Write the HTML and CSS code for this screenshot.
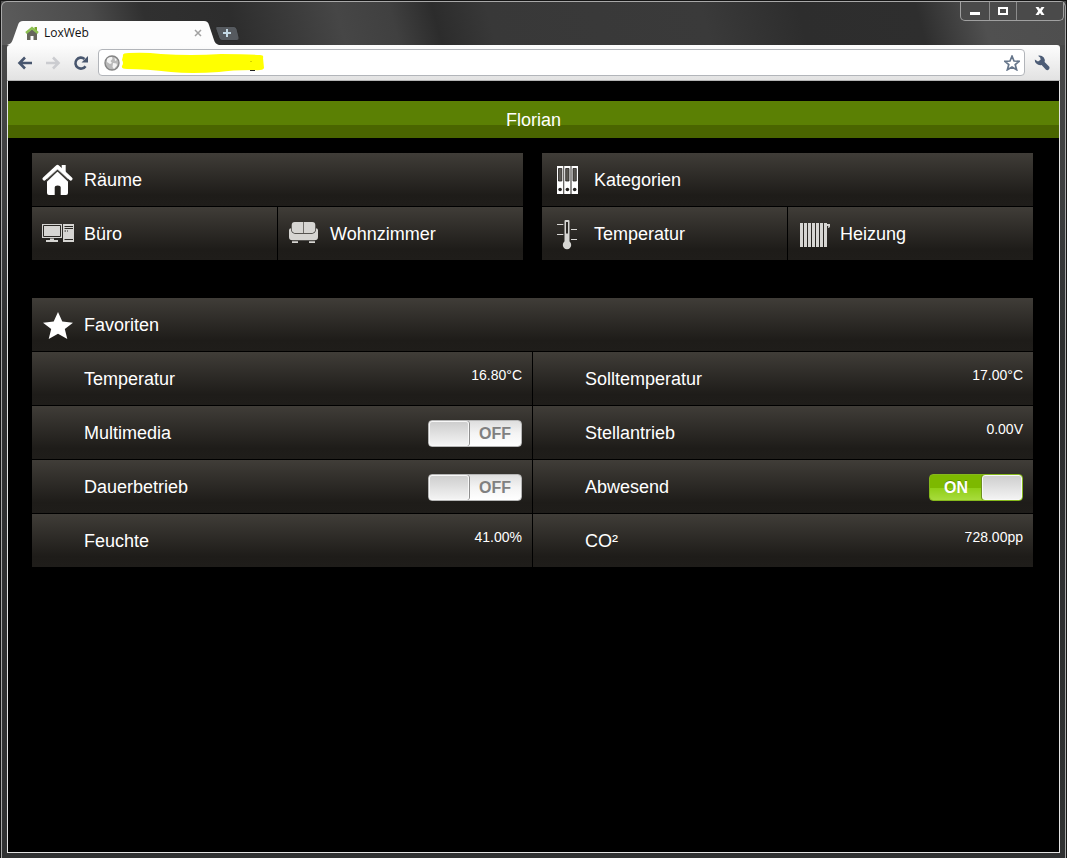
FILE: index.html
```html
<!DOCTYPE html>
<html lang="de">
<head>
    <meta charset="UTF-8">
    <meta name="viewport" content="width=device-width, initial-scale=1.0">
    <title>LoxWeb</title>
    <link rel="stylesheet" href="styles.css">
</head>
<body>

<div class="window">

    <!-- Title bar -->
    <div class="titlebar">
        <div class="tab">
            <svg class="tab-shape" viewBox="0 0 212 24" preserveAspectRatio="none">
                <path d="M0 24 C4 23 5 21 6 18 L11 4 Q12 0 16 0 H197 Q201 0 202 4 L207 19 Q208 23 212 24 Z" fill="#fdfdfd"/>
            </svg>
            <svg class="favicon" viewBox="0 0 14 14">
                <path d="M2 7 L7 3 L12 7 V14 H8.5 V10 H5.5 V14 H2 Z" fill="#66665c"/>
                <path d="M9.5 1 H12 V5 H9.5 Z" fill="#7ba62f"/>
                <path d="M1 7 L7 2 L13 7" fill="none" stroke="#8cc050" stroke-width="2.4"/>
            </svg>
            <span class="tab-title">LoxWeb</span>
            <button class="tab-close" aria-label="Tab schließen">
                <svg viewBox="0 0 8 8"><path d="M1 1 L7 7 M7 1 L1 7" stroke="#a2a2a2" stroke-width="1.5"/></svg>
            </button>
        </div>
        <button class="new-tab" aria-label="Neuer Tab">
            <svg viewBox="0 0 25 15">
                <path d="M2 .5 H19 Q21 .5 22 3 L24 11 Q25 14.5 22 14.5 H7 Q5 14.5 4 12 L.8 3 Q0 .5 2 .5 Z" fill="#565a5f" stroke="#2a2a2a"/>
                <path d="M12 3 V11 M8 7 H16" stroke="#c4d8e4" stroke-width="2"/>
            </svg>
        </button>
        <div class="window-buttons">
            <button class="win-btn" aria-label="Minimieren">
                <svg viewBox="0 0 12 12"><rect x="1" y="7" width="10" height="3" fill="#fff"/></svg>
            </button>
            <button class="win-btn win-max" aria-label="Maximieren">
                <svg viewBox="0 0 12 12"><rect x="2" y="3" width="8" height="6" fill="none" stroke="#fff" stroke-width="2"/></svg>
            </button>
            <button class="win-btn win-close" aria-label="Schließen">
                <svg viewBox="0 0 12 12"><path d="M1.5 2 H4.5 L6 4 L7.5 2 H10.5 L7.8 6 L10.5 10 H7.5 L6 8 L4.5 10 H1.5 L4.2 6 Z" fill="#fff"/></svg>
            </button>
        </div>
    </div>

    <div class="frame">
        <!-- Toolbar -->
        <div class="toolbar">
            <div class="nav">
                <button class="tool" aria-label="Zurück">
                    <svg viewBox="0 0 16 16"><path d="M15 8 H3 M8 2.5 L2.5 8 L8 13.5" fill="none" stroke="#48566e" stroke-width="2.6"/></svg>
                </button>
                <button class="tool" aria-label="Vorwärts">
                    <svg viewBox="0 0 16 16"><path d="M1 8 H13 M8 2.5 L13.5 8 L8 13.5" fill="none" stroke="#cbccd0" stroke-width="2.6"/></svg>
                </button>
                <button class="tool" aria-label="Neu laden">
                    <svg viewBox="0 0 16 16">
                        <path d="M12.5 11.2 A5.5 5.5 0 1 1 11.5 3.9" fill="none" stroke="#48566e" stroke-width="2.6"/>
                        <path d="M15 1 V7.5 H8.5 Z" fill="#48566e"/>
                    </svg>
                </button>
            </div>
            <div class="omnibox">
                <svg class="globe" viewBox="0 0 16 16">
                    <circle cx="8" cy="8" r="7" fill="#b9b9b9" stroke="#858585" stroke-width="1.4"/>
                    <path d="M3 4 Q5 1.5 8 2 L8.500 4 L6.500 6 L8 8 L6 9 L3 7 Z M9 8 L12.5 8.5 L13 10.5 L10 14 L8.5 12 Z M10.5 2.5 L13 5 L11 6 Z" fill="#f4f4f4"/>
                </svg>
                <input class="address" type="text" aria-label="Adresse">
                <svg class="marker" viewBox="0 0 144 22">
                    <path d="M2 4 Q1 1 8 1 Q24 0 40 2 Q70 4 100 2 Q125 2 139 3 Q143 3 142 6 L143 16 Q142 19 132 18 Q110 18 98 20 Q70 22 50 20 Q25 17 6 17 Q0 17 1 14 Q3 11 1 8 Z" fill="#ff0"/>
                    <path d="M129 18.5 H134" stroke="#222"/>
                    <path d="M130 9 V10" stroke="#a8a800"/>
                </svg>
                <button class="tool" aria-label="Lesezeichen">
                    <svg viewBox="0 0 16 16"><path d="M8 1.2 L10 6 L15.2 6.3 L11.2 9.6 L12.6 14.7 L8 11.9 L3.4 14.7 L4.8 9.6 L.8 6.3 L6 6 Z" fill="#fff" stroke="#65758a" stroke-width="1.7"/></svg>
                </button>
            </div>
            <button class="tool" aria-label="Einstellungen">
                <svg viewBox="0 0 16 16"><path d="M4 .8 Q7.5 0 9.8 2.5 Q11.3 4.5 10.6 7 L15.3 11.7 Q16 13 15 14.3 Q13.5 15.8 12 14.8 L7.6 10 Q4.5 10.6 2.3 8.5 Q.5 6.5 .8 4.5 L4 6.5 L6.6 4.8 L6.2 2.5 Z" fill="#4c5c76"/></svg>
            </button>
        </div>

        <!-- Page -->
        <main class="page">
            <h1 class="title">Florian</h1>

            <div class="groups">
                <section class="panel">
                    <a class="cell wide" href="#raeume">
                        <svg class="icon" viewBox="0 0 32 32" fill="#fff">
                            <path d="M19.7 1 H23.7 V10 L19.7 6 Z"/>
                            <path d="M5 15 L15.5 5 L26 15 V29 Q26 31 24 31 H18.7 V23.5 Q18.7 21.5 15.7 21.5 Q12.7 21.5 12.7 23.5 V31 H7 Q5 31 5 29 Z"/>
                            <path d="M3.8 17.7 L15.5 6.5 L27.2 17.7" fill="none" stroke="#34322e" stroke-width="1.6"/>
                            <path d="M2.3 14.8 L15.5 2.6 L28.7 14.8" fill="none" stroke="#fff" stroke-width="3.6" stroke-linecap="round" stroke-linejoin="round"/>
                        </svg>
                        <span>Räume</span>
                    </a>
                    <a class="cell" href="#buero">
                        <svg class="icon" viewBox="0 0 32 32" fill="#d6d5d2">
                            <path d="M0 6 H20 V20 H0 Z M21 6 H32 V24 H21 Z M8 20.5 H12 V22 H16 V24 H4 V22 H8 Z"/>
                            <path d="M1.5 7.5 H18.5 V18.5 H1.5 Z M22.5 8.5 H31 M22.5 10.5 H31 M22.5 13 H24 M25 13 H26 M22.5 21.5 H31" fill="none" stroke="#2b2925"/>
                        </svg>
                        <span>Büro</span>
                    </a>
                    <a class="cell" href="#wohnzimmer">
                        <svg class="icon" viewBox="0 0 32 32" fill="#d6d5d2">
                            <path d="M3.7 7 Q3.7 4 6.7 4 H15.2 V15 H6.5 Q3.7 14.5 3.7 11 Z M15.8 4 H24.3 Q27.3 4 27.3 7 V11 Q27.3 14.5 24.5 15 H15.8 Z"/>
                            <path d="M1 12 Q1.2 10.3 3 10.3 Q3 15.7 7 15.7 H24 Q28 15.7 28 10.3 Q29.8 10.3 30 12 V19 Q30 22.3 26.5 22.3 H4.5 Q1 22.3 1 19 Z"/>
                            <path d="M4 23.2 H10 V25 H4 Z M21 23.2 H27 V25 H21 Z"/>
                        </svg>
                        <span>Wohnzimmer</span>
                    </a>
                </section>

                <section class="panel">
                    <a class="cell wide" href="#kategorien">
                        <svg class="icon" viewBox="0 0 32 32">
                            <path d="M5 2 H11.3 V30 H5 Z M12.2 2 H18.5 V30 H12.2 Z M19.5 2 H26 V30 H19.5 Z" fill="#fff"/>
                            <path d="M6.5 4.5 H9.8 V17 H6.5 Z M13.7 4.5 H17 V17 H13.7 Z M21 4.5 H24.3 V17 H21 Z" fill="#5a5853" stroke="#24221f" stroke-width=".8"/>
                            <circle cx="8.1" cy="25.5" r="1.8" fill="#24221f"/>
                            <circle cx="15.4" cy="25.5" r="1.8" fill="#24221f"/>
                            <circle cx="22.7" cy="25.5" r="1.8" fill="#24221f"/>
                        </svg>
                        <span>Kategorien</span>
                    </a>
                    <a class="cell" href="#temperatur">
                        <svg class="icon" viewBox="0 0 32 32" fill="#d6d5d2">
                            <path d="M12.5 3 Q12.5 2 13.5 2 H16.5 Q17.5 2 17.5 3 V24 H12.5 Z"/>
                            <circle cx="15" cy="27" r="4.2"/>
                            <path d="M14 4 H16 V15.5 H14 Z" fill="#2b2925"/>
                            <path d="M5 6.5 H11.3 M5 16.5 H11.3 M19 11.5 H25 M19 21.5 H25" stroke="#d6d5d2"/>
                        </svg>
                        <span>Temperatur</span>
                    </a>
                    <a class="cell" href="#heizung">
                        <svg class="icon" viewBox="0 0 32 32">
                            <path d="M3.5 5 V29 M7.5 5 V29 M11.5 5 V29 M15.5 5 V29 M19.5 5 V29 M23.5 5 V29 M27.5 5 V29" stroke="#d6d5d2" stroke-width="3"/>
                            <path d="M29 6 H32 V8.5 L31 10 H30.2 V8 H29 Z" fill="#d6d5d2"/>
                        </svg>
                        <span>Heizung</span>
                    </a>
                </section>
            </div>

            <section class="panel favorites">
                <a class="cell wide" href="#favoriten">
                    <svg class="icon" viewBox="0 0 32 32">
                        <path d="M16 3 L20.3 12.6 L31 13.7 L22.8 20 L25.3 30 L16 24.7 L6.7 30 L9.2 20 L1 13.7 L11.7 12.6 Z" fill="#fff"/>
                    </svg>
                    <span>Favoriten</span>
                </a>
                <div class="cell item">
                    <span>Temperatur</span>
                    <span class="value">16.80°C</span>
                </div>
                <div class="cell item">
                    <span>Solltemperatur</span>
                    <span class="value">17.00°C</span>
                </div>
                <div class="cell item">
                    <label for="multimedia">Multimedia</label>
                    <span class="switch">
                        <input type="checkbox" id="multimedia">
                        <span class="switch-text">OFF</span>
                    </span>
                </div>
                <div class="cell item">
                    <span>Stellantrieb</span>
                    <span class="value">0.00V</span>
                </div>
                <div class="cell item">
                    <label for="dauerbetrieb">Dauerbetrieb</label>
                    <span class="switch">
                        <input type="checkbox" id="dauerbetrieb">
                        <span class="switch-text">OFF</span>
                    </span>
                </div>
                <div class="cell item">
                    <label for="abwesend">Abwesend</label>
                    <span class="switch">
                        <input type="checkbox" id="abwesend" checked>
                        <span class="switch-text">ON</span>
                    </span>
                </div>
                <div class="cell item">
                    <span>Feuchte</span>
                    <span class="value">41.00%</span>
                </div>
                <div class="cell item">
                    <span>CO²</span>
                    <span class="value">728.00pp</span>
                </div>
            </section>
        </main>
    </div>
</div>

<script>
    // Keep the switch captions in step with their state
    document.querySelectorAll(".switch input").forEach(function (box) {
        box.addEventListener("change", function () {
            box.nextElementSibling.textContent = box.checked ? "ON" : "OFF";
        });
    });
</script>

</body>
</html>
```

FILE: styles.css
```css
*,
*::before {
    margin: 0;
    padding: 0;
    box-sizing: border-box;
}

body {
    background-color: #151515;
    color: #fff;
    font-family: "Liberation Sans", Arial, sans-serif;
    font-size: 18px;
}

button {
    background: none;
    border: none;
    flex: none;
}

svg {
    display: block;
}

/* Browser window */
.window {
    display: flex;
    flex-direction: column;
    min-height: 100vh;
    border: 1px solid #151515;
    border-bottom: none;
    background: linear-gradient(#4c4c4c, #3c3d3e 25%, #2e2f30 40%, #303132);
}

.titlebar {
    display: flex;
    align-items: flex-end;
    height: 44px;
    padding: 0 1px 0 5px;
    border: 1px solid #a8a8a8;
    border-bottom: none;
    border-radius: 6px 6px 0 0;
    background: linear-gradient(75deg, #5c5c5c, #4b4b4b 9%, #303030 14%, #2d2d2d 22%, #464646 32%, #404040 37%, #2c2c2c 41%, #383838 46%, #3a3a3a 66%, #2d2d2d 75%, #2e2e2e 86%, #505050 92%, #4e4e4e);
}

.tab {
    position: relative;
    display: flex;
    align-items: center;
    width: 212px;
    height: 24px;
    padding: 0 17px 0 18px;
}

.tab-shape {
    position: absolute;
    top: 0;
    left: 0;
    width: 100%;
    height: 100%;
}

.favicon {
    position: relative;
    width: 14px;
    height: 14px;
}

.tab-title {
    position: relative;
    flex: 1;
    margin-left: 5px;
    color: #111;
    font-family: "Open Sans", "Noto Sans", sans-serif;
    font-size: 12px;
    line-height: 24px;
}

.tab-close {
    position: relative;
    width: 8px;
    height: 8px;
}

.new-tab {
    width: 25px;
    height: 15px;
    margin: 0 0 4px -4px;
}

.window-buttons {
    display: flex;
    align-self: flex-start;
    margin-left: auto;
    border: 1px solid #a0a0a0;
    border-top: none;
    border-radius: 0 0 5px 5px;
    background-color: #4a4a4a;
}

.win-btn {
    display: flex;
    align-items: center;
    justify-content: center;
    width: 28px;
    height: 18px;
}

.win-btn svg {
    width: 12px;
    height: 12px;
}

.win-max {
    border: solid #8c8c8c;
    border-width: 0 1px;
}

.win-close {
    width: 46px;
}

.frame {
    flex: 1;
    display: flex;
    flex-direction: column;
    padding: 0 5px 5px;
    border: solid #a8a8a8;
    border-width: 0 1px;
}

/* Toolbar */
.toolbar {
    display: flex;
    align-items: center;
    gap: 9px;
    height: 36px;
    padding: 0 10px;
    border-bottom: 1px solid #b4b4b4;
    border-radius: 3px 3px 0 0;
    background: linear-gradient(#fdfdfd, #e2e2e2);
}

.nav {
    display: flex;
    gap: 12px;
}

.tool,
.tool svg {
    width: 16px;
    height: 16px;
}

.omnibox {
    position: relative;
    flex: 1;
    display: flex;
    align-items: center;
    gap: 4px;
    height: 27px;
    padding: 0 4px 0 5px;
    border: 1px solid #b2b5ba;
    border-radius: 4px;
    background-color: #fff;
}

.globe {
    width: 16px;
    height: 16px;
}

.address {
    flex: 1;
    min-width: 0;
    height: 20px;
    border: none;
    outline: none;
    font-size: 14px;
}

.marker {
    position: absolute;
    top: 2px;
    left: 22px;
    width: 144px;
    height: 22px;
}

/* Page content */
.page {
    flex: 1;
    padding: 20px 0;
    border: 1px solid #e4e4e4;
    border-top: none;
    background-color: #000;
}

.title {
    height: 37px;
    background: linear-gradient(#5b8004 24px, #4a6500 24px);
    font-size: 18px;
    font-weight: normal;
    line-height: 39px;
    text-align: center;
}

.groups {
    display: grid;
    grid-template-columns: 1fr 1fr;
    gap: 19px;
    margin: 15px 26px 38px 24px;
}

.panel {
    display: grid;
    grid-template-columns: 1fr 1fr;
    gap: 1px;
}

.favorites {
    margin: 0 26px 0 24px;
}

.cell {
    display: flex;
    align-items: center;
    gap: 10px;
    height: 53px;
    padding: 2px 10px 0;
    background: linear-gradient(#403d38, #1e1c19 80%, #1f1d1a);
    color: #fff;
    text-decoration: none;
}

.wide {
    grid-column: 1 / -1;
}

.icon {
    width: 32px;
    height: 32px;
    margin-bottom: 1px;
}

/* Favourites */
.item {
    justify-content: space-between;
    padding-left: 52px;
}

.value {
    align-self: flex-start;
    font-size: 14px;
    line-height: 42px;
}

.switch {
    position: relative;
    width: 94px;
    height: 27px;
}

.switch input {
    appearance: none;
    display: block;
    width: 94px;
    height: 27px;
    border: 1px solid #b5b5b5;
    border-radius: 4px;
    background: linear-gradient(#dedede, #f4f4f4 50%, #fff);
}

.switch input::before {
    content: "";
    display: block;
    width: 40px;
    height: 25px;
    border: 1px solid #f8f8f8;
    border-radius: 3px;
    box-shadow: 1px 0 0 #8e8e8e;
    background: linear-gradient(#cecece, #f3f3f3);
}

.switch input:checked {
    border-color: #86b81c;
    background: linear-gradient(#7db900 50%, #8fcd15 50%, #a8dc3c);
}

.switch input:checked::before {
    margin-left: auto;
    box-shadow: -1px 0 0 #6d8f20;
}

.switch-text {
    position: absolute;
    top: 0;
    right: 0;
    width: 54px;
    color: #808080;
    font-size: 16px;
    font-weight: bold;
    line-height: 28px;
    text-align: center;
    pointer-events: none;
}

.switch input:checked + .switch-text {
    right: 40px;
    color: #fff;
    text-shadow: 0 -1px 0 #628f08;
}
```
